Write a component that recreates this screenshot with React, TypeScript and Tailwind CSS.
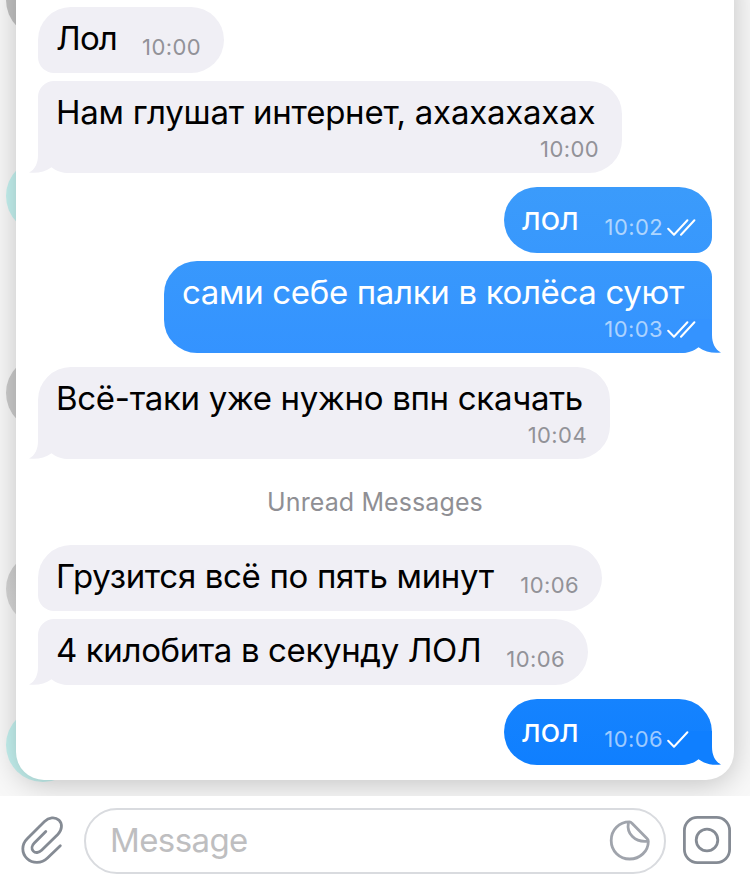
import clsx from "clsx";

type Message = {
  id: number;
  text: string;
  time: string;
  outgoing?: boolean;
  stacked?: boolean;
  tail?: boolean;
  status?: "sent" | "read";
  className: string;
  textClassName: string;
};

const earlier: Message[] = [
  {
    id: 1,
    text: "Лол",
    time: "10:00",
    className: "w-[186px] rounded-[33px] rounded-bl-[16px]",
    textClassName: "tracking-[-0.8px]",
  },
  {
    id: 2,
    text: "Нам глушат интернет, ахахахахах",
    time: "10:00",
    stacked: true,
    tail: true,
    className: "mt-2 w-[584px] rounded-[33px] rounded-tl-[16px]",
    textClassName: "tracking-[-0.23px]",
  },
  {
    id: 3,
    text: "лол",
    time: "10:02",
    outgoing: true,
    status: "read",
    className:
      "mt-[14px] w-[208px] rounded-[33px] rounded-br-[16px] from-[#3b9bfb] to-[#3898fd]",
    textClassName: "tracking-[-0.4px]",
  },
  {
    id: 4,
    text: "сами себе палки в колёса суют",
    time: "10:03",
    outgoing: true,
    stacked: true,
    tail: true,
    status: "read",
    className:
      "mt-2 w-[548px] rounded-[33px] rounded-tr-[16px] from-[#3898fc] to-[#3493ff] text-[#3493ff]",
    textClassName: "tracking-[-0.33px]",
  },
  {
    id: 5,
    text: "Всё-таки уже нужно впн скачать",
    time: "10:04",
    stacked: true,
    tail: true,
    className: "mt-[14px] w-[572px] rounded-[33px]",
    textClassName: "tracking-[-0.3px]",
  },
];

const unread: Message[] = [
  {
    id: 6,
    text: "Грузится всё по пять минут",
    time: "10:06",
    className: "w-[564px] rounded-[33px] rounded-bl-[16px]",
    textClassName: "tracking-[-0.33px]",
  },
  {
    id: 7,
    text: "4 килобита в секунду ЛОЛ",
    time: "10:06",
    tail: true,
    className: "mt-2 w-[550px] rounded-[33px] rounded-tl-[16px]",
    textClassName: "tracking-[-0.37px]",
  },
  {
    id: 8,
    text: "лол",
    time: "10:06",
    outgoing: true,
    tail: true,
    status: "sent",
    className:
      "mt-[14px] w-[208px] rounded-[33px] from-[#1583fe] to-[#0f7fff] text-[#0f7fff]",
    textClassName: "tracking-[-0.4px]",
  },
];

function Tail({ outgoing }: { outgoing?: boolean }) {
  return (
    <svg
      viewBox="0 0 41 34"
      className={clsx(
        "absolute bottom-0 h-[34px] w-[41px]",
        outgoing ? "-right-[9px] -scale-x-100" : "-left-[9px] text-[#f0eff5]"
      )}
      fill="currentColor"
    >
      <path d="M9 0V16C9 24 6 30.5 0 33.5C8 34.6 16 33 22.5 28.2C27 32 33 34 41 34V0Z" />
    </svg>
  );
}

function Checks({ status }: { status: "sent" | "read" }) {
  return (
    <svg
      viewBox="0 0 29 18"
      className="mb-1 ml-1 h-[18px] w-[29px]"
      fill="none"
      stroke="white"
      strokeWidth="2"
      strokeLinecap="round"
      strokeLinejoin="round"
    >
      <path d="M1.2 9.8L7 15.8L20.4 1.2" />
      {status === "read" && <path d="M14 15.8L27.4 1.2" />}
    </svg>
  );
}

function Bubble({ message }: { message: Message }) {
  const { text, time, outgoing, stacked, tail, status } = message;

  return (
    <div
      className={clsx(
        "relative flex shrink-0",
        stacked ? "h-[92px] flex-col" : "h-[66px] justify-between",
        outgoing ? "self-end bg-linear-to-b pr-4" : "bg-[#f0eff5] pr-[23px]",
        "pl-[18px] pt-[10px]",
        message.className
      )}
    >
      {tail && <Tail outgoing={outgoing} />}
      <p
        className={clsx(
          "relative whitespace-nowrap text-[33px] leading-[42px]",
          outgoing ? "text-white" : "text-black",
          message.textClassName
        )}
      >
        {text}
      </p>
      <div
        className={clsx(
          "relative flex items-end self-end",
          stacked ? "mt-[2px]" : "mb-3"
        )}
      >
        <span
          className={clsx(
            "text-[22px] leading-7 tracking-[0.4px]",
            outgoing ? "text-white/60" : "text-[#929298]"
          )}
        >
          {time}
        </span>
        {status && <Checks status={status} />}
      </div>
    </div>
  );
}

function Avatars() {
  return (
    <div className="absolute -top-[37px] left-[6px]">
      <div className="size-[74px] rounded-full bg-[#c2c2c2]" />
      <div className="mt-[122px] size-[74px] rounded-full bg-[#c5f2f0]" />
      <div className="mt-[123px] size-[74px] rounded-full bg-[#cbcbcb]" />
      <div className="mt-[122px] size-[74px] rounded-full bg-linear-to-b from-[#cdcdcd] to-[#dadada]" />
      <div className="mt-[82px] size-[74px] rounded-full bg-[#c5f2f0]" />
    </div>
  );
}

function Composer() {
  return (
    <footer className="relative flex h-[90px] items-start bg-white pl-5 pt-3">
      <svg
        viewBox="0 0 44 50"
        className="mt-[7px] h-[50px] w-11"
        fill="none"
        stroke="#858b94"
        strokeWidth="2.8"
        strokeLinecap="round"
      >
        <path d="M40.3 30.8L27.5 43C21.5 48.7 12.6 48.8 7 43.4C1.4 38 1.4 29.4 7.2 23.7L24.5 6.6C28.8 2.3 35 1.6 38.9 5.1C42.6 8.8 42.2 15 38 19.2L21.6 35.2C18.8 37.9 15.4 38.3 13.3 36.1C11.2 33.9 11.7 30.6 14.3 28L25.8 16.6" />
      </svg>
      <div className="ml-5 flex h-[66px] w-[582px] items-center justify-between rounded-full border-2 border-[#d9dbdf] pl-6 pr-[13px]">
        <span className="pb-[2px] text-[33px] leading-[42px] tracking-[-0.6px] text-[#bebec0]">
          Message
        </span>
        <svg
          viewBox="0 0 42 42"
          className="size-[42px]"
          fill="none"
          stroke="#a0a4ac"
          strokeWidth="2.8"
          strokeLinejoin="round"
        >
          <path d="M20.5 1.9C10 1.9 2.2 10 2.2 20.4C2.2 31 10.4 39 20.7 39C31 39 39.3 31.2 39.3 21.4C39.3 20.2 38.9 19.4 38 18.5L23.2 3.4C22.2 2.4 21.6 1.9 20.5 1.9Z" />
          <path d="M19.4 2.4C17.4 13.6 25.6 22.8 39 21.2" />
        </svg>
      </div>
      <svg
        viewBox="0 0 48 48"
        className="ml-[17px] mt-2 size-12"
        fill="none"
        stroke="#858b94"
        strokeWidth="2.8"
      >
        <rect x="1.4" y="1.4" width="45.2" height="45.2" rx="13" />
        <circle cx="24" cy="24" r="10.8" />
      </svg>
    </footer>
  );
}

export default function App() {
  return (
    <div className="relative flex h-[886px] w-[750px] flex-col overflow-hidden bg-[#f8f8f8] font-['Inter','Liberation_Sans',sans-serif]">
      <div className="relative h-[796px] overflow-hidden">
        <Avatars />
        <main className="relative mx-4 -mt-10 flex h-[820px] flex-col rounded-[28px] bg-white px-[22px] pt-[47px] shadow-[0_4px_30px_rgba(0,0,0,0.22)]">
          {earlier.map((message) => (
            <Bubble key={message.id} message={message} />
          ))}
          <div className="flex h-[86px] items-center justify-center pt-[2px] text-[25px] tracking-[0.1px] text-[#8f8f94]">
            Unread Messages
          </div>
          {unread.map((message) => (
            <Bubble key={message.id} message={message} />
          ))}
        </main>
      </div>
      <Composer />
    </div>
  );
}
